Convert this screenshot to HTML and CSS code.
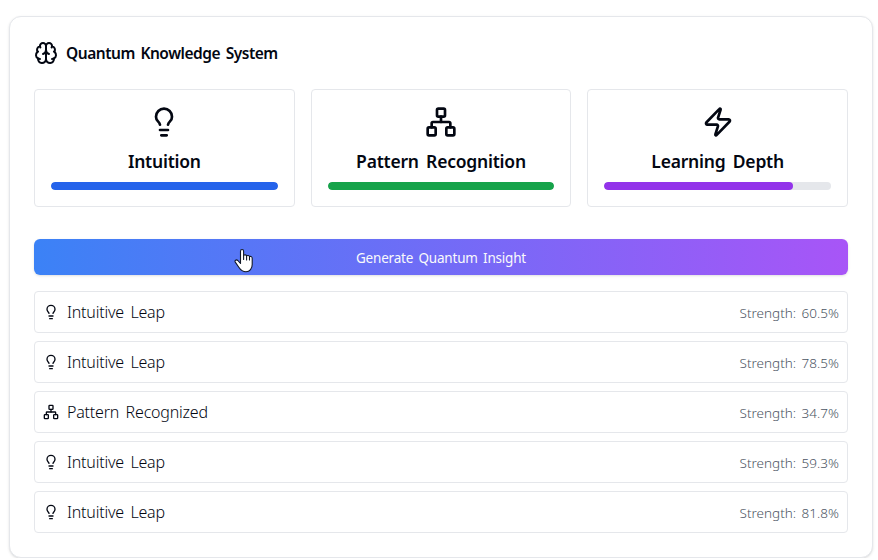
FILE: index.html
```html
<!DOCTYPE html>
<html lang="en">
<head>
<meta charset="utf-8">
<title>Quantum Knowledge System</title>
<link rel="stylesheet" href="styles.css">
</head>
<body>
<svg class="sprite" aria-hidden="true">
  <symbol id="bulb" viewBox="0 0 24 24"><path d="M15 14c.2-1 .7-1.7 1.5-2.5 1-.9 1.5-2.2 1.5-3.5A6 6 0 0 0 6 8c0 1 .2 2.2 1.5 3.5.7.7 1.3 1.5 1.5 2.5"/><path d="M9 18h6"/><path d="M10 22h4"/></symbol>
  <symbol id="network" viewBox="0 0 24 24"><rect x="16" y="16" width="6" height="6" rx="1"/><rect x="2" y="16" width="6" height="6" rx="1"/><rect x="9" y="2" width="6" height="6" rx="1"/><path d="M5 16v-3a1 1 0 0 1 1-1h12a1 1 0 0 1 1 1v3"/><path d="M12 12V8"/></symbol>
  <symbol id="zap" viewBox="0 0 24 24"><path d="M4 14a1 1 0 0 1-.78-1.63l9.9-10.2a.5.5 0 0 1 .86.46l-1.92 6.02A1 1 0 0 0 13 10h7a1 1 0 0 1 .78 1.63l-9.9 10.2a.5.5 0 0 1-.86-.46l1.92-6.02A1 1 0 0 0 11 14z"/></symbol>
  <symbol id="brain" viewBox="0 0 24 24"><path d="M12 5a3 3 0 1 0-5.997.125 4 4 0 0 0-2.526 5.77 4 4 0 0 0 .556 6.588A4 4 0 1 0 12 18Z"/><path d="M12 5a3 3 0 1 1 5.997.125 4 4 0 0 1 2.526 5.77 4 4 0 0 1-.556 6.588A4 4 0 1 1 12 18Z"/><path d="M15 13a4.5 4.5 0 0 1-3-4 4.5 4.5 0 0 1-3 4"/><path d="M17.599 6.5a3 3 0 0 0 .399-1.375"/><path d="M6.003 5.125A3 3 0 0 0 6.401 6.5"/><path d="M3.477 10.896a4 4 0 0 1 .585-.396"/><path d="M19.938 10.5a4 4 0 0 1 .585.396"/><path d="M6 18a4 4 0 0 1-1.967-.516"/><path d="M19.967 17.484A4 4 0 0 1 18 18"/></symbol>
</svg>
<main class="card">
  <header class="card-header">
    <svg class="icon icon-md"><use href="#brain"/></svg>
    <h1 class="title">Quantum Knowledge System</h1>
  </header>
  <section class="metrics">
    <div class="metric">
      <svg class="icon icon-lg"><use href="#bulb"/></svg>
      <h2 class="metric-name">Intuition</h2>
      <div class="track"><div class="fill blue" style="width:100%"></div></div>
    </div>
    <div class="metric">
      <svg class="icon icon-lg"><use href="#network"/></svg>
      <h2 class="metric-name">Pattern Recognition</h2>
      <div class="track"><div class="fill green" style="width:100%"></div></div>
    </div>
    <div class="metric">
      <svg class="icon icon-lg"><use href="#zap"/></svg>
      <h2 class="metric-name">Learning Depth</h2>
      <div class="track"><div class="fill purple" style="width:83.3%"></div></div>
    </div>
  </section>
  <button class="generate"><span>Generate Quantum Insight</span></button>
  <ul class="insights">
    <li class="insight"><svg class="icon icon-sm"><use href="#bulb"/></svg><span class="name">Intuitive Leap</span><span class="strength">Strength: 60.5%</span></li>
    <li class="insight"><svg class="icon icon-sm"><use href="#bulb"/></svg><span class="name">Intuitive Leap</span><span class="strength">Strength: 78.5%</span></li>
    <li class="insight"><svg class="icon icon-sm"><use href="#network"/></svg><span class="name">Pattern Recognized</span><span class="strength">Strength: 34.7%</span></li>
    <li class="insight"><svg class="icon icon-sm"><use href="#bulb"/></svg><span class="name">Intuitive Leap</span><span class="strength">Strength: 59.3%</span></li>
    <li class="insight"><svg class="icon icon-sm"><use href="#bulb"/></svg><span class="name">Intuitive Leap</span><span class="strength">Strength: 81.8%</span></li>
  </ul>
</main>
<svg class="cursor" viewBox="0 0 19 25"><path d="M6.5 15.5V3.2C6.5 .9 9.6 .9 9.6 3.2V7.2C10.8 6.5 12.3 6.9 12.6 7.8C13.8 7.1 15 7.5 15.5 8.5C16.8 8 18.2 8.7 18.2 10.4V16.5C18.2 20.5 15.8 23.7 12 23.7C8.5 23.7 6.6 22 4.8 19.2L1.3 14.1C.3 12.5 2.2 11.1 3.8 12.5Z"/><path d="M9.6 7.2V11.5M12.6 7.8V12M15.5 8.5V12"/></svg>
</body>
</html>
```
FILE: styles.css
```css
* { box-sizing: border-box; }
body {
  margin: 0;
  padding: 16px 5px 0 9px;
  background: #fff;
  color: #030712;
  font-family: "Noto Sans", "Open Sans", sans-serif;
  font-size: 16px;
  line-height: 24px;
  overflow: hidden;
}
.sprite { position: absolute; width: 0; height: 0; }
.card {
  height: 542px;
  padding: 24px;
  border: 1px solid #e5e7eb;
  border-radius: 12px;
  background: #fff;
  box-shadow: 0 1px 3px rgba(0,0,0,.1), 0 1px 2px -1px rgba(0,0,0,.1);
}
.card-header { display: flex; align-items: center; gap: 8px; margin-bottom: 24px; }
.icon {
  display: block;
  flex: none;
  fill: none;
  stroke: currentColor;
  stroke-width: 2;
  stroke-linecap: round;
  stroke-linejoin: round;
}
.icon-sm { width: 16px; height: 16px; }
.icon-md { width: 24px; height: 24px; }
.icon-lg { width: 32px; height: 32px; }
h1, h2 { margin: 0; font-weight: 600; white-space: nowrap; }
.title { font-size: 15.5px; line-height: 24px; letter-spacing: -.47px; word-spacing: 2px; }
.metrics { display: grid; grid-template-columns: repeat(3, 1fr); gap: 16px; margin-bottom: 32px; }
.metric {
  display: flex;
  flex-direction: column;
  align-items: center;
  gap: 8px;
  padding: 16px;
  border: 1px solid #e5e7eb;
  border-radius: 4px;
}
.metric-name { height: 28px; padding-top: 1px; font-size: 17.5px; line-height: 28px; letter-spacing: -.22px; word-spacing: 3px; }
.track { width: 100%; height: 8px; border-radius: 4px; background: #e5e7eb; overflow: hidden; }
.fill { height: 100%; border-radius: 4px; }
.blue { background: #2563eb; }
.green { background: #16a34a; }
.purple { background: #9333ea; }
.generate {
  display: flex;
  align-items: center;
  justify-content: center;
  width: 100%;
  height: 36px;
  margin: 0 0 16px;
  padding: 2px 0 0;
  border: 0;
  border-radius: 6px;
  background: linear-gradient(to right, #3b82f6, #a855f7);
  box-shadow: 0 1px 3px rgba(0,0,0,.1), 0 1px 2px -1px rgba(0,0,0,.1);
  color: #f9fafb;
  font: 400 13.5px/20px "Noto Sans", "Open Sans", sans-serif;
  letter-spacing: -.2px;
  word-spacing: 2px;
}
.insights { display: grid; gap: 8px; margin: 0; padding: 0; list-style: none; }
.insight {
  display: flex;
  align-items: center;
  gap: 8px;
  height: 42px;
  padding: 8px;
  border: 1px solid #e5e7eb;
  border-radius: 4px;
}
.name { font-weight: 300; letter-spacing: -.2px; word-spacing: 2.5px; }
.strength { margin-left: auto; padding-top: 2px; color: #4b5563; font-size: 13.5px; font-weight: 300; line-height: 20px; word-spacing: 2px; }
.cursor { position: absolute; left: 233.5px; top: 248px; width: 19px; height: 25px; fill: #fff; stroke: #111827; stroke-width: 1.1; stroke-linejoin: round; stroke-linecap: round; }
```
